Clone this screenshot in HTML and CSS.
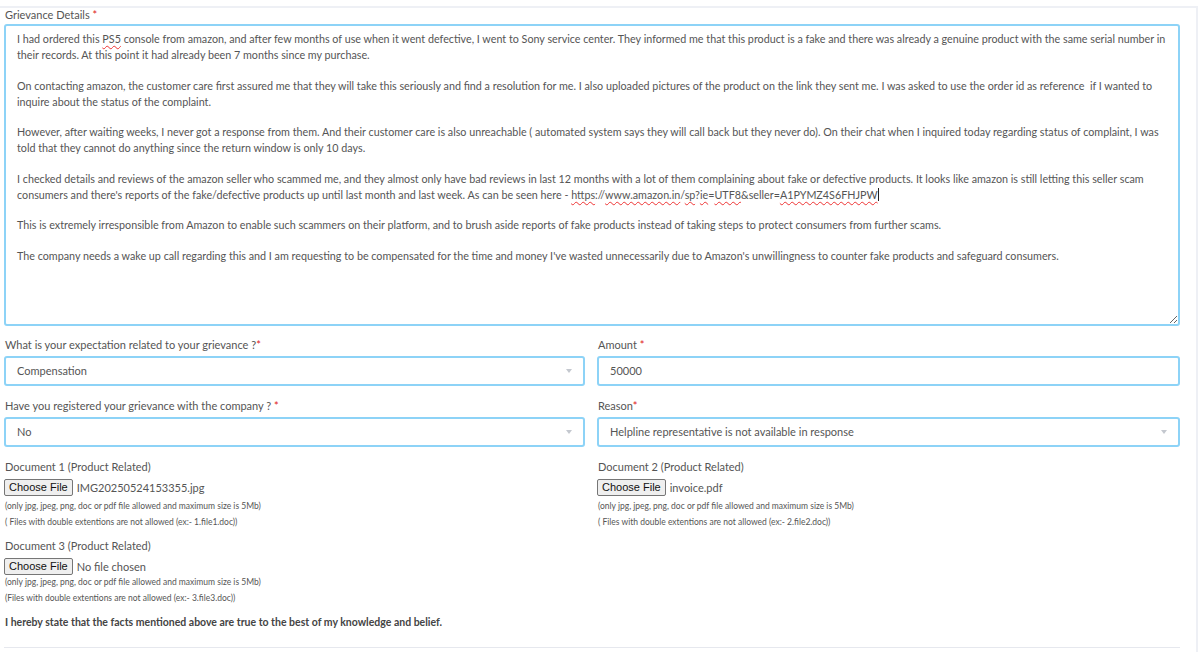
FILE: index.html
```html
<!DOCTYPE html>
<html>
<head>
    <title>Grievance Form</title>
    <link rel="stylesheet" href="styles.css">
</head>
<body>
    <div class="card">
        <label class="field-label">Grievance Details <span class="req">*</span></label>
        <div class="details-box">
            <p>I had ordered this <span class="typo">PS5</span> console from amazon, and after few months of use when it went defective, I went to Sony service center. They informed me that this product is a fake and there was already a genuine product with the same serial number in their records. At this point it had already been 7 months since my purchase.</p>
            <p>On contacting amazon, the customer care first assured me that they will take this seriously and find a resolution for me. I also uploaded pictures of the product on the link they sent me. I was asked to use the order id as reference &nbsp;if I wanted to inquire about the status of the complaint.</p>
            <p>However, after waiting weeks, I never got a response from them. And their customer care is also unreachable ( automated system says they will call back but they never do). On their chat when I inquired today regarding status of complaint, I was told that they cannot do anything since the return window is only 10 days.</p>
            <p>I checked details and reviews of the amazon seller who scammed me, and they almost only have bad reviews in last 12 months with a lot of them complaining about fake or defective products. It looks like amazon is still letting this seller scam consumers and there's reports of the fake/defective products up until last month and last week. As can be seen here - <span class="typo">https</span>://<span class="typo">www.amazon.in</span>/<span class="typo">sp</span>?<span class="typo">ie</span>=<span class="typo">UTF8</span>&amp;seller=<span class="typo">A1PYMZ4S6FHJPW</span><span class="caret"></span></p>
            <p>This is extremely irresponsible from Amazon to enable such scammers on their platform, and to brush aside reports of fake products instead of taking steps to protect consumers from further scams.</p>
            <p>The company needs a wake up call regarding this and I am requesting to be compensated for the time and money I've wasted unnecessarily due to Amazon's unwillingness to counter fake products and safeguard consumers.</p>
        </div>

        <div class="form-grid">
            <div class="form-group">
                <label class="field-label">What is your expectation related to your grievance ?<span class="req">*</span></label>
                <div class="select-box">Compensation<span class="arrow"></span></div>
            </div>
            <div class="form-group">
                <label class="field-label">Amount <span class="req">*</span></label>
                <div class="select-box">50000</div>
            </div>

            <div class="form-group">
                <label class="field-label">Have you registered your grievance with the company ? <span class="req">*</span></label>
                <div class="select-box">No<span class="arrow"></span></div>
            </div>
            <div class="form-group">
                <label class="field-label">Reason<span class="req">*</span></label>
                <div class="select-box">Helpline representative is not available in response<span class="arrow"></span></div>
            </div>

            <div class="form-group doc">
                <label class="field-label">Document 1 (Product Related)</label>
                <div class="file-row"><button type="button" class="file-btn">Choose File</button><span class="file-name">IMG20250524153355.jpg</span></div>
                <p class="hint">(only jpg, jpeg, png, doc or pdf file allowed and maximum size is 5Mb)</p>
                <p class="hint">( Files with double extentions are not allowed (ex:- 1.file1.doc))</p>
            </div>
            <div class="form-group doc">
                <label class="field-label">Document 2 (Product Related)</label>
                <div class="file-row"><button type="button" class="file-btn">Choose File</button><span class="file-name">invoice.pdf</span></div>
                <p class="hint">(only jpg, jpeg, png, doc or pdf file allowed and maximum size is 5Mb)</p>
                <p class="hint">( Files with double extentions are not allowed (ex:- 2.file2.doc))</p>
            </div>

            <div class="form-group doc last">
                <label class="field-label">Document 3 (Product Related)</label>
                <div class="file-row"><button type="button" class="file-btn">Choose File</button><span class="file-name">No file chosen</span></div>
                <p class="hint">(only jpg, jpeg, png, doc or pdf file allowed and maximum size is 5Mb)</p>
                <p class="hint">(Files with double extentions are not allowed (ex:- 3.file3.doc))</p>
            </div>
        </div>

        <p class="declaration">I hereby state that the facts mentioned above are true to the best of my knowledge and belief.</p>
        <hr class="divider">
    </div>
</body>
</html>
```

FILE: styles.css
```css
body {
    font-family: Lato, "Open Sans", sans-serif;
    background-color: #fff;
    color: #555;
    margin: 0;
    padding: 0;
}

.card {
    width: 1198px;
    height: 652px;
    box-sizing: border-box;
    margin-top: 6px;
    border-top: 2px solid #eef0f5;
    border-right: 2px solid #eef0f5;
    padding: 0 16px 0 4px;
}

.field-label {
    display: block;
    font-size: 11px;
    line-height: 14px;
    color: #555;
    padding-left: 1px;
}

.req {
    color: #e02020;
}

.details-box {
    margin-top: 2px;
    height: 302px;
    box-sizing: border-box;
    border: 2px solid #8dd3f7;
    border-radius: 3px;
    padding: 5px 12px 0 11px;
    font-size: 10.75px;
    line-height: 16.3px;
    color: #555;
    overflow: hidden;
    resize: both;
}

.details-box p {
    margin: 0 0 14px;
}

.typo {
    text-decoration: underline wavy #e33;
    text-decoration-thickness: 1px;
    text-underline-offset: 2px;
}

.caret {
    display: inline-block;
    width: 1px;
    height: 13px;
    background: #222;
    vertical-align: -2px;
}

.form-grid {
    display: grid;
    grid-template-columns: 581px 583px;
    column-gap: 12px;
    margin-top: 12px;
}

.form-group {
    margin-bottom: 13px;
}

.form-group.doc {
    margin-bottom: 10px;
}

.form-group.last {
    margin-bottom: 9px;
}

.select-box {
    position: relative;
    margin-top: 4px;
    height: 30px;
    box-sizing: border-box;
    border: 2px solid #8dd3f7;
    border-radius: 3px;
    padding: 0 11px;
    font-size: 11px;
    line-height: 26px;
    color: #555;
}

.arrow {
    position: absolute;
    right: 11px;
    top: 11px;
    border-left: 3px solid transparent;
    border-right: 3px solid transparent;
    border-top: 4px solid #c4c8cf;
}

.file-row {
    display: flex;
    align-items: center;
    margin-top: 5px;
    height: 17px;
}

.file-btn {
    font-family: "Liberation Sans", Arial, sans-serif;
    font-size: 11px;
    color: #111;
    background: #efefef;
    border: 1px solid #767676;
    border-radius: 2px;
    padding: 1px 4px;
    height: 17px;
    line-height: 13px;
}

.file-name {
    font-size: 11px;
    color: #555;
    margin-left: 4px;
}

.hint {
    margin: 3px 0 0 1px;
    font-size: 8.5px;
    line-height: 13px;
    color: #555;
}

.file-row + .hint {
    margin-top: 4px;
}

.last .file-row + .hint {
    margin-top: 1px;
}

.declaration {
    margin: 0 0 0 1px;
    font-size: 10.5px;
    line-height: 16px;
    font-weight: bold;
    color: #444;
}

.divider {
    margin: 17px 0 0;
    border: 0;
    border-top: 1px solid #e6e8ee;
}
```
